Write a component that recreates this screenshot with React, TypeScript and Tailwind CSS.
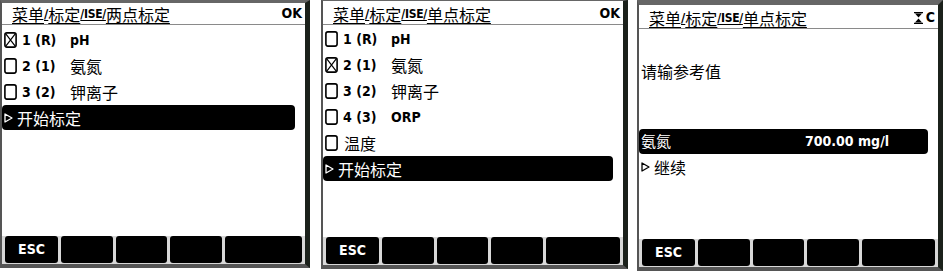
import type { ReactNode } from 'react'

// latin parts on the display are a narrow bold face, chinese is plain
const cjk = "font-['Noto_Sans_CJK_SC',sans-serif]"
const lat = "font-['DejaVu_Sans_Condensed','DejaVu_Sans',sans-serif] font-bold"

const CheckBox = ({ checked }: { checked?: boolean }) => (
  <svg width="13" height="16" viewBox="0 0 13 16" className="shrink-0">
    <rect x="0.9" y="0.9" width="11.2" height="14.2" rx="2" fill="none" stroke="#000" strokeWidth="1.6" />
    {checked && (
      <path d="M2 2.2 L11 13.8 M11 2.2 L2 13.8" stroke="#000" strokeWidth="1.2" />
    )}
  </svg>
)

const Arrow = ({ color = '#fff' }: { color?: string }) => (
  <svg width="9" height="10" viewBox="0 0 9 10" className="shrink-0">
    <path d="M1 1 L8 5 L1 9 Z" fill="none" stroke={color} strokeWidth="1.3" strokeLinejoin="round" />
  </svg>
)

const Hourglass = () => (
  <svg width="9" height="12" viewBox="0 0 9 12">
    <path d="M0 0.5 H9 M0 11.5 H9" stroke="#000" strokeWidth="1.4" />
    <path d="M1 1.5 H8 L4.5 5.6 Z M1 10.5 H8 L4.5 6.4 Z" fill="#000" />
  </svg>
)

const Title = ({ last, right }: { last: string; right: ReactNode }) => (
  <div className="flex h-[22px] items-center justify-between border-b border-[#8a8a8a] pl-[10px] pr-[3px]">
    <span className="flex items-center leading-none underline decoration-1 underline-offset-[2px]">
      <span className={`${cjk} text-[16px]`}>菜单</span>
      <span className={`${lat} text-[13px]`}>/</span>
      <span className={`${cjk} text-[16px]`}>标定</span>
      <span className={`${lat} text-[12px] tracking-[-0.3px]`}>/ISE/</span>
      <span className={`${cjk} text-[16px]`}>{last}</span>
    </span>
    <span className="flex items-center">{right}</span>
  </div>
)

const Row = ({ checked, num, label, latin }: { checked?: boolean; num?: string; label: string; latin?: boolean }) => (
  <div className="flex h-[26px] items-center pl-[2px]">
    <CheckBox checked={checked} />
    {num && <span className={`${lat} ml-[5px] w-[48px] text-[14px] leading-none`}>{num}</span>}
    <span className={latin ? `${lat} text-[14px]` : `${cjk} text-[16px] ${num ? '' : 'ml-[6px]'}`}>{label}</span>
  </div>
)

const Highlight = ({ children }: { children: ReactNode }) => (
  <div className="mr-[10px] flex h-[25px] items-center gap-[4px] rounded-[4px] bg-black pl-[2px] text-white">
    {children}
  </div>
)

const Buttons = () => (
  <div className="mt-auto flex gap-[3px] bg-[#d8d8d8] px-[3px] pb-[1px]">
    {[53, 52, 51, 52].map((w, i) => (
      <div
        key={i}
        style={{ width: w }}
        className="flex h-[27px] items-center justify-center rounded-[3px] bg-black"
      >
        {i === 0 && <span className={`${lat} text-[14px] text-white`}>ESC</span>}
      </div>
    ))}
    <div className="h-[27px] flex-1 rounded-[3px] bg-black" />
  </div>
)

const Panel = ({ w, h, top, children }: { w: string; h: string; top: string; children: ReactNode }) => (
  <div className={`${w} ${h} ${top} flex flex-col border-b-[4px] border-l-2 border-r-[5px] border-[#555] border-r-[#1b211b] border-t-[#666] bg-white text-black`}>
    {children}
  </div>
)

export default function App() {
  return (
    <div className="flex h-[277px] w-[948px] bg-white">
      <Panel w="w-[310px]" h="h-[268px]" top="border-t-[3px]">
        <Title last="两点标定" right={<span className={`${lat} text-[14px]`}>OK</span>} />
        <div className="mt-[2px]">
          <Row checked num="1 (R)" label="pH" latin />
          <Row num="2 (1)" label="氨氮" />
          <Row num="3 (2)" label="钾离子" />
          <Highlight>
            <Arrow />
            <span className={`${cjk} text-[16px]`}>开始标定</span>
          </Highlight>
        </div>
        <Buttons />
      </Panel>

      <div className="ml-[11px]">
        <Panel w="w-[307px]" h="h-[269px]" top="border-t">
          <div className="pt-[2px]">
            <Title last="单点标定" right={<span className={`${lat} text-[14px]`}>OK</span>} />
          </div>
          <div className="mt-[1px]">
            <Row num="1 (R)" label="pH" latin />
            <Row checked num="2 (1)" label="氨氮" />
            <Row num="3 (2)" label="钾离子" />
            <Row num="4 (3)" label="ORP" latin />
            <Row label="温度" />
            <Highlight>
              <Arrow />
              <span className={`${cjk} text-[16px]`}>开始标定</span>
            </Highlight>
          </div>
          <Buttons />
        </Panel>
      </div>

      <div className="ml-[9px]">
        <Panel w="w-[306px]" h="h-[271px]" top="border-t-[5px]">
          <div className="pt-[2px]">
            <Title
              last="单点标定"
              right={
                <span className="flex items-center gap-[3px]">
                  <Hourglass />
                  <span className={`${lat} text-[14px]`}>C</span>
                </span>
              }
            />
          </div>
          <div className={`${cjk} mt-[30px] pl-[2px] text-[16px]`}>请输参考值</div>
          <div className="mt-[46px]">
            <Highlight>
              <span className={`${cjk} w-[160px] text-[15px]`}>氨氮</span>
              <span className={`${lat} text-[14px]`}>700.00 mg/l</span>
            </Highlight>
          </div>
          <div className="flex h-[25px] items-center gap-[4px] pl-[2px]">
            <Arrow color="#000" />
            <span className={`${cjk} text-[16px]`}>继续</span>
          </div>
          <Buttons />
        </Panel>
      </div>
    </div>
  )
}
